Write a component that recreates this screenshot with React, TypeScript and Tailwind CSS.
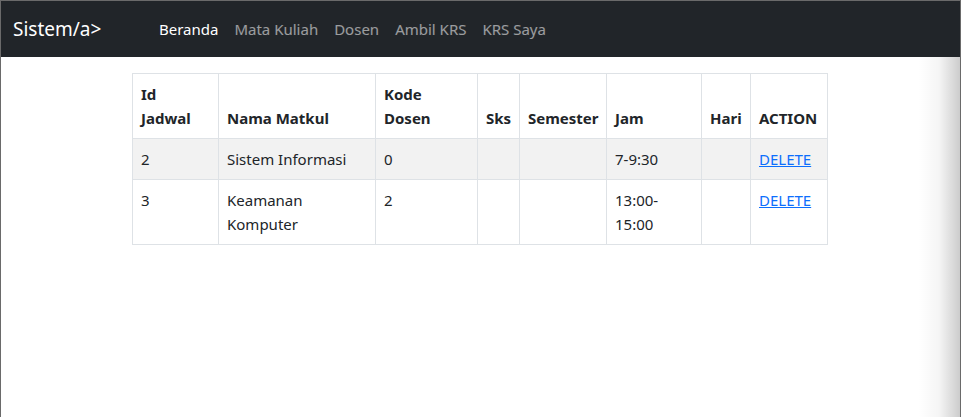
import React from 'react';

interface Jadwal {
  id: string;
  matkul: string;
  dosen: string;
  sks: string;
  semester: string;
  jam: string;
  hari: string;
}

const rows: Jadwal[] = [
  { id: '2', matkul: 'Sistem Informasi', dosen: '0', sks: '', semester: '', jam: '7-9:30', hari: '' },
  { id: '3', matkul: 'Keamanan Komputer', dosen: '2', sks: '', semester: '', jam: '13:00-15:00', hari: '' },
];

const navLinks = ['Beranda', 'Mata Kuliah', 'Dosen', 'Ambil KRS', 'KRS Saya'];

const cell = 'border border-[#dee2e6] px-2 py-2 align-top';
const head = 'border border-[#dee2e6] px-2 py-2 align-bottom text-left font-bold';

export default function App() {
  return (
    <div
      className="relative h-[417px] overflow-hidden border-l border-t border-r border-[#6a6a6a] bg-white text-[#212529] text-[15px] leading-[24px]"
      style={{ fontFamily: '"Noto Sans", "Open Sans", sans-serif' }}
    >
      <nav className="flex h-[56px] items-center bg-[#212529] px-3">
        <a className="w-[138px] text-[19px] leading-[30px] text-white">Sistem/a&gt;</a>
        <ul className="flex">
          {navLinks.map((link, i) => (
            <li key={link}>
              <a className={`block px-2 ${i === 0 ? 'text-white' : 'text-white/55'}`}>{link}</a>
            </li>
          ))}
        </ul>
      </nav>

      <div className="ml-[131px] mt-4 w-[694px]">
        <table className="w-full table-fixed border-collapse">
          <thead>
            <tr>
              <th className={`${head} w-[86px]`}>Id<br />Jadwal</th>
              <th className={`${head} w-[157px]`}>Nama Matkul</th>
              <th className={`${head} w-[102px]`}>Kode Dosen</th>
              <th className={`${head} w-[42px]`}>Sks</th>
              <th className={`${head} w-[87px]`}>Semester</th>
              <th className={`${head} w-[95px]`}>Jam</th>
              <th className={`${head} w-[49px]`}>Hari</th>
              <th className={`${head} w-[77px]`}>ACTION</th>
            </tr>
          </thead>
          <tbody>
            {rows.map((row, i) => (
              <tr key={row.id} className={i % 2 === 0 ? 'bg-[#f2f2f2]' : 'bg-white'}>
                <td className={cell}>{row.id}</td>
                <td className={cell}>{row.matkul}</td>
                <td className={cell}>{row.dosen}</td>
                <td className={cell}>{row.sks}</td>
                <td className={cell}>{row.semester}</td>
                <td className={cell}>{row.jam}</td>
                <td className={cell}>{row.hari}</td>
                <td className={cell}>
                  <a href="#" className="text-[#0d6efd] underline">DELETE</a>
                </td>
              </tr>
            ))}
          </tbody>
        </table>
      </div>

      <div className="pointer-events-none absolute right-0 top-[56px] bottom-0 w-[42px] bg-gradient-to-r from-transparent via-black/[0.04] to-black/20" />
    </div>
  );
}
